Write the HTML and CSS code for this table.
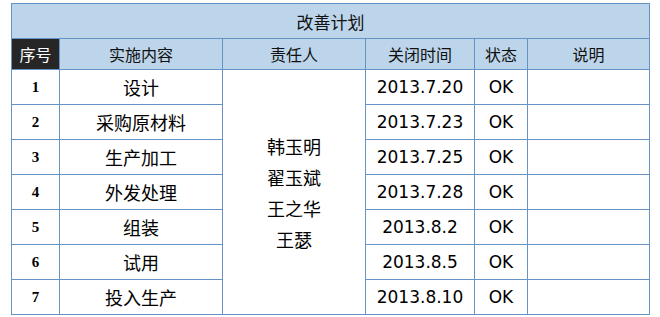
FILE: index.html
```html
<!DOCTYPE html>
<html lang="zh">
<head>
<meta charset="utf-8">
<link rel="stylesheet" href="styles.css">
</head>
<body>
<table class="plan">
  <colgroup>
    <col class="c-no"><col class="c-task"><col class="c-owner"><col class="c-date"><col class="c-status"><col class="c-note">
  </colgroup>
  <thead>
    <tr class="title-row"><th colspan="6" class="title">改善计划</th></tr>
    <tr class="head-row">
      <th class="dark">序号</th>
      <th>实施内容</th>
      <th>责任人</th>
      <th>关闭时间</th>
      <th>状态</th>
      <th>说明</th>
    </tr>
  </thead>
  <tbody>
    <tr>
      <td class="no">1</td><td class="task">设计</td>
      <td class="owner" rowspan="7"><div class="names"><span>韩玉明</span><span>翟玉斌</span><span>王之华</span><span>王瑟</span></div></td>
      <td class="num">2013.7.20</td><td class="num">OK</td><td></td>
    </tr>
    <tr><td class="no">2</td><td class="task">采购原材料</td><td class="num">2013.7.23</td><td class="num">OK</td><td></td></tr>
    <tr><td class="no">3</td><td class="task">生产加工</td><td class="num">2013.7.25</td><td class="num">OK</td><td></td></tr>
    <tr><td class="no">4</td><td class="task">外发处理</td><td class="num">2013.7.28</td><td class="num">OK</td><td></td></tr>
    <tr><td class="no">5</td><td class="task">组装</td><td class="num">2013.8.2</td><td class="num">OK</td><td></td></tr>
    <tr><td class="no">6</td><td class="task">试用</td><td class="num">2013.8.5</td><td class="num">OK</td><td></td></tr>
    <tr><td class="no">7</td><td class="task">投入生产</td><td class="num">2013.8.10</td><td class="num">OK</td><td></td></tr>
  </tbody>
</table>
</body>
</html>
```
FILE: styles.css
```css
html, body {
  margin: 0;
  background: #ffffff;
}
body {
  padding: 3px 0 0 11px;
  font-family: "Noto Sans CJK SC", "Noto Sans", sans-serif;
  color: #000;
}
.plan {
  border-collapse: collapse;
  table-layout: fixed;
  width: 639px;
}
.c-no { width: 48px; }
.c-task { width: 163px; }
.c-owner { width: 143px; }
.c-date { width: 109px; }
.c-status { width: 53px; }
.c-note { width: 122px; }

.plan th, .plan td {
  border: 1px solid #6693c6;
  padding: 0;
  text-align: center;
  vertical-align: middle;
  font-weight: normal;
  overflow: hidden;
  white-space: nowrap;
}
.plan thead th {
  background: #bdd5ea;
  font-size: 16px;
  color: #111;
}
.title-row { height: 35px; }
.plan th.title { font-size: 17px; }
.head-row { height: 31px; }
.plan th.dark {
  background: #262626;
  color: #ffffff;
}
.plan tbody tr { height: 35px; }
.plan td.no {
  font-family: "Liberation Serif", "DejaVu Serif", serif;
  font-weight: bold;
  font-size: 15px;
}
.plan td.task {
  font-size: 18px;
}
.plan td.num {
  font-family: "DejaVu Sans", Verdana, sans-serif;
  font-size: 17px;
  color: #000;
}
.plan td.owner {
  font-size: 18px;
}
.names {
  display: flex;
  flex-direction: column;
  align-items: center;
  gap: 5px;
  line-height: 26px;
}
```
